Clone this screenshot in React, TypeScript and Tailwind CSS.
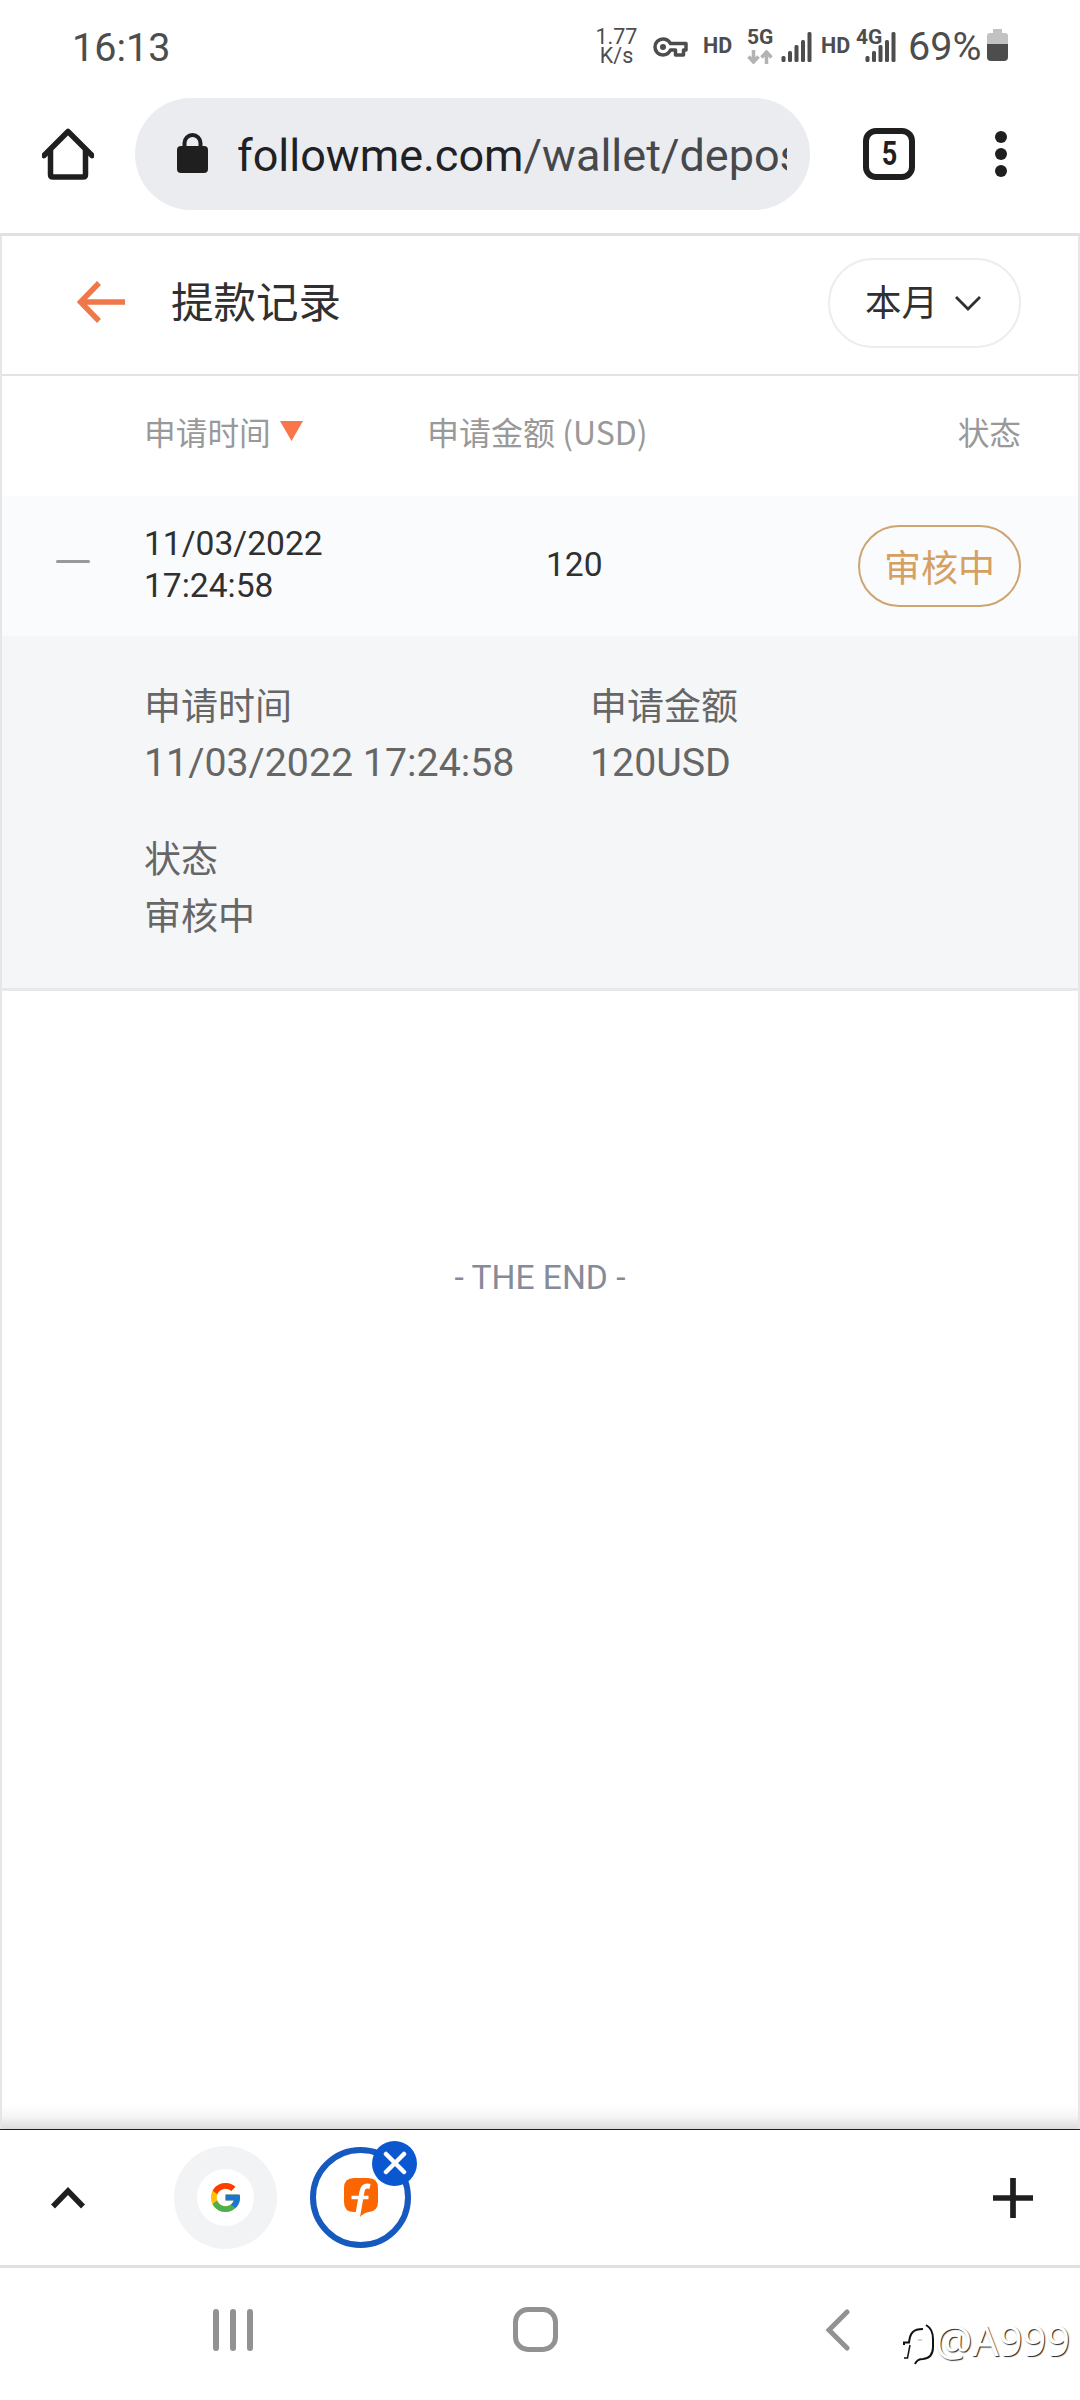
import { FcGoogle } from "react-icons/fc";

const signalBars = [6, 11, 17, 22, 30];

const record = {
  date: "11/03/2022",
  time: "17:24:58",
  amount: "120",
  currency: "USD",
  status: "审核中",
};

const details = [
  { label: "申请时间", value: `${record.date} ${record.time}` },
  { label: "申请金额", value: `${record.amount}${record.currency}` },
  { label: "状态", value: record.status },
];

function Signal() {
  return (
    <svg width="31" height="30" viewBox="0 0 31 30" fill="#4d4d4d">
      {signalBars.map((h, i) => (
        <rect key={i} x={0.5 + i * 6.5} y={30 - h} width="4" height={h} rx="1.5" />
      ))}
    </svg>
  );
}

function StatusBar() {
  return (
    <div className="h-[92px] flex items-start text-[#4d4d4d]">
      <span className="ml-[72px] mt-[24px] text-[39.500px] leading-[48px]">16:13</span>
      <div className="ml-auto mr-[72px] flex items-start">
        <div className="w-[43px] mt-[27px] text-[21.500px] leading-[19px] text-center whitespace-nowrap">
          <div>1.77</div>
          <div>K/s</div>
        </div>
        <svg className="ml-[15px] mt-[37px]" width="35" height="20" viewBox="0 0 35 20" fill="none" stroke="#4d4d4d">
          <path
            d="M17.5 6.5H33V13H30.5V18H22.500V13H17.5C16 16 13.5 18 10 18A8 8 0 0 1 10 2C13.500 2 16 4 17.500 6.500Z"
            strokeWidth="3.500"
            strokeLinejoin="round"
          />
          <circle cx="10" cy="10" r="3" fill="#4d4d4d" stroke="none" />
        </svg>
        <span className="ml-[15px] mt-[34px] w-[31px] text-[21.500px] leading-[24px] font-bold">HD</span>
        <div className="ml-[13px] mt-[26px] w-[28px]">
          <div className="text-[21px] leading-[22px] font-bold">5G</div>
          <svg className="mt-[2px]" width="28" height="14" viewBox="0 0 28 14" fill="none" stroke="#b3b3b3" strokeWidth="3.5">
            <path d="M6.500 0V11M1.500 6.500L6.500 12L11.500 6.500M19.500 14V3M14.500 7.500L19.500 2L24.500 7.500" />
          </svg>
        </div>
        <div className="ml-[6px] mt-[32px]">
          <Signal />
        </div>
        <span className="ml-[9px] mt-[34px] w-[31px] text-[21.500px] leading-[24px] font-bold">HD</span>
        <div className="relative ml-[3px] mt-[32px] w-[41px] flex justify-end">
          <Signal />
          <span className="absolute left-[1px] -top-[5px] h-[18px] text-[21px] leading-[20px] font-bold [text-shadow:-1px_1px_0_#fff,1px_1px_0_#fff]">
            4G
          </span>
        </div>
        <span className="ml-[12px] mt-[23px] w-[74px] text-[39.500px] leading-[48px] whitespace-nowrap">69%</span>
        <svg className="ml-[5px] mt-[29px]" width="21" height="32" viewBox="0 0 21 32">
          <path d="M6 0H15V4H18Q21 4 21 7V16H0V7Q0 4 3 4H6Z" fill="#c2c2c2" />
          <path d="M0 15H21V28Q21 32 17 32H4Q0 32 0 28Z" fill="#4d4d4d" />
        </svg>
      </div>
    </div>
  );
}

function AddressBar() {
  return (
    <div className="h-[144px] flex items-start border-b-[3px] border-[#e1e1e1]">
      <svg className="ml-[42px] mt-[36px]" width="52" height="53" viewBox="0 0 52 53" fill="none" stroke="#1f1f1f" strokeWidth="5.500">
        <path d="M2 27.500L26 3.500L50 27.500" strokeLinejoin="round" strokeLinecap="round" />
        <path d="M8.500 22V46.500Q8.500 49 11 49H41Q43.500 49 43.500 46.500V22" />
      </svg>
      <div className="ml-[41px] mt-[6px] h-[112px] w-[675px] rounded-full bg-[#ebecf0] flex items-center">
        <svg className="ml-[42px] -mt-[2px]" width="31" height="40" viewBox="0 0 31 40">
          <path d="M7.500 15V10A8 8 0 0 1 23.500 10V15" fill="none" stroke="#1f1f1f" strokeWidth="4" />
          <rect x="0" y="13" width="31" height="27" rx="4" fill="#1f1f1f" />
        </svg>
        <div className="ml-[29px] mt-[3px] w-[550px] overflow-hidden whitespace-nowrap text-[45px] leading-[60px] text-[#202124]">
          followme.com<span className="text-[#47484b]">/wallet/deposit</span>
        </div>
      </div>
      <div className="ml-[53px] mt-[36px] w-[52px] h-[52px] rounded-[13px] border-[6px] border-[#1f1f1f] flex items-center justify-center">
        <span className="text-[33px] leading-[40px] font-bold text-[#1f1f1f] scale-x-[0.82]">5</span>
      </div>
      <div className="ml-[80px] mt-[39px] flex flex-col gap-[5px]">
        <i className="block size-3 rounded-full bg-[#1f1f1f]" />
        <i className="block size-3 rounded-full bg-[#1f1f1f]" />
        <i className="block size-3 rounded-full bg-[#1f1f1f]" />
      </div>
    </div>
  );
}

function PageHeader() {
  return (
    <div className="h-[140px] flex items-start border-b-2 border-[#e3e3e3]">
      <svg className="ml-[75px] mt-[45px]" width="48" height="42" viewBox="0 0 48 42" fill="none" stroke="#ef774a" strokeWidth="5.500">
        <path d="M48 21H4M22 2L3.500 21L22 40" />
      </svg>
      <h1 className="ml-[46px] mt-[38px] text-[42.500px] leading-[60px] text-[#303030]">提款记录</h1>
      <button className="ml-auto mr-[57px] mt-[22px] w-[193px] h-[90px] rounded-full border-2 border-[#ededed] flex items-center text-[#303030]">
        <span className="ml-[35px] mt-[1px] text-[36.500px] leading-[50px]">本月</span>
        <svg className="ml-[17px] mt-[1px]" width="26" height="15" viewBox="0 0 26 15" fill="none" stroke="#303030" strokeWidth="2.800">
          <path d="M1 1L13 13L25 1" />
        </svg>
      </button>
    </div>
  );
}

function RecordTable() {
  return (
    <div>
      <div className="h-[120px] flex items-start pt-[35px] text-[31.700px] leading-[48px] text-[#999]">
        <span className="ml-[142px] w-[127px]">申请时间</span>
        <svg className="ml-[9px] mt-[10px]" width="23" height="20" viewBox="0 0 23 20">
          <path d="M0 0H23L11.500 20Z" fill="#f9754a" />
        </svg>
        <span className="ml-[124px] -mt-[4px] text-[32px] font-['Noto_Sans_CJK_SC',sans-serif]">申请金额 (USD)</span>
        <span className="ml-auto mr-[57px]">状态</span>
      </div>

      <div className="h-[140px] flex items-start bg-[#fafbfd] text-[33.600px] leading-[42px] text-[#303030]">
        <i className="block ml-[54px] mt-[64px] w-[34px] h-[3px] rounded-full bg-[#999]" />
        <div className="ml-[54px] mt-[27px] w-[200px]">
          <div>{record.date}</div>
          <div>{record.time}</div>
        </div>
        <span className="ml-[202px] mt-[48px]">{record.amount}</span>
        <span className="ml-auto mr-[57px] mt-[29px] w-[163px] h-[82px] rounded-full border-2 border-[#cfa470] flex items-center justify-center pt-[7px] text-[37px] text-[#d5a062]">
          {record.status}
        </span>
      </div>

      <div className="h-[355px] grid grid-cols-[446px_auto] content-start gap-y-[42px] bg-[#f5f6f8] border-b-[3px] border-[#e7e8eb] pl-[142px] pt-[44px] text-[#666]">
        {details.map((item) => (
          <div key={item.label}>
            <div className="text-[37px] leading-[56px]">{item.label}</div>
            <div className={item.label === "状态" ? "text-[37px] leading-[57px]" : "text-[39.300px] leading-[55px]"}>
              {item.value}
            </div>
          </div>
        ))}
      </div>
    </div>
  );
}

function TabStrip() {
  return (
    <div className="h-[139px] flex items-start border-t border-t-[#1f1f1f] border-b-[3px] border-b-[#e0e2e1]">
      <svg className="ml-[51px] mt-[57px]" width="34" height="22" viewBox="0 0 34 22" fill="none" stroke="#1f1f1f" strokeWidth="5.500">
        <path d="M2 19.500L17 4L32 19.500" />
      </svg>
      <div className="ml-[89px] mt-[16px] size-[103px] rounded-full bg-[#f1f3f5] flex items-center justify-center">
        <div className="size-[57px] rounded-full bg-white flex items-center justify-center">
          <FcGoogle className="size-[35px]" />
        </div>
      </div>
      <div className="relative ml-[33px] mt-[17px] size-[101px] rounded-full border-[6px] border-[#1659bf]">
        <svg className="absolute left-[28px] top-[25px]" width="34" height="39" viewBox="0 0 34 39">
          <path
            d="M10 0H24Q34 0 34 10V24Q34 33 25 34Q20 34.500 16 39L12 34H10Q0 34 0 24V10Q0 0 10 0Z"
            fill="#fb6602"
          />
          <path d="M26 8.500C20 7 18.500 10 17.700 15L13.500 39" fill="none" stroke="#fff" strokeWidth="5" />
          <path d="M7.500 19.500H24.500" stroke="#fff" strokeWidth="3.500" />
        </svg>
        <div className="absolute left-[56px] -top-[12px] size-[45px] rounded-full bg-[#0b57d0] flex items-center justify-center">
          <svg className="-mt-[2px]" width="24" height="24" viewBox="0 0 24 24" stroke="#fff" strokeWidth="4.500" strokeLinecap="round">
            <path d="M3 3L21 21M21 3L3 21" />
          </svg>
        </div>
      </div>
      <svg className="ml-auto mr-[47px] mt-[48px]" width="40" height="40" viewBox="0 0 40 40" stroke="#1f1f1f" strokeWidth="5.700">
        <path d="M20 0V40M0 20H40" />
      </svg>
    </div>
  );
}

function NavBar() {
  return (
    <div className="h-[132px] flex items-start text-[#929292]">
      <svg className="ml-[213px] mt-[41px]" width="40" height="42" viewBox="0 0 40 42" fill="currentColor">
        <rect x="0" width="6" height="42" rx="3" />
        <rect x="17" width="6" height="42" rx="3" />
        <rect x="34" width="6" height="42" rx="3" />
      </svg>
      <i className="block ml-[260px] mt-[39px] w-[45px] h-[45px] rounded-[15px] border-[5px] border-[#929292]" />
      <svg className="ml-[267px] mt-[41px]" width="25" height="42" viewBox="0 0 25 42" fill="none" stroke="currentColor" strokeWidth="5">
        <path d="M22 3L4 21L22 39" strokeLinecap="round" strokeLinejoin="miter" />
      </svg>
      {/* watermark */}
      <div className="ml-[53px] mt-[53px] flex items-start">
        <svg width="34" height="46" viewBox="0 0 34 46" fill="none" stroke="#111">
          <path d="M1 24V21.500H6C7 12 10 8 20 8" strokeWidth="2" />
          <path d="M7 24L4.500 37H1" strokeWidth="1.500" />
          <path d="M23 4Q30 8 30 18V26Q30 37 20 38Q14 38 12 43" strokeWidth="2" />
          <path d="M15 19H19" stroke="#aaa" strokeWidth="1" />
        </svg>
        <span className="-ml-[2px] -mt-[11px] font-['Noto_Sans',sans-serif] text-[41.500px] leading-[60px] text-white [text-shadow:1px_1px_1px_#222]">
          @A999
        </span>
      </div>
    </div>
  );
}

export default function App() {
  return (
    <div
      lang="zh-CN"
      className="w-[1080px] h-[2400px] flex flex-col overflow-hidden bg-white font-[Roboto,'Noto_Sans_CJK_SC',sans-serif]"
    >
      <StatusBar />
      <AddressBar />
      <main className="h-[1893px] flex flex-col border-x-2 border-[#e6e6e8]">
        <PageHeader />
        <RecordTable />
        <p className="mt-[261px] text-center text-[33.600px] leading-[52px] text-[#858b99]">- THE END -</p>
        <div className="mt-auto h-[24px] bg-linear-to-b from-white via-[#f5f5f5] to-[#dcdcdc]" />
      </main>
      <TabStrip />
      <NavBar />
    </div>
  );
}
